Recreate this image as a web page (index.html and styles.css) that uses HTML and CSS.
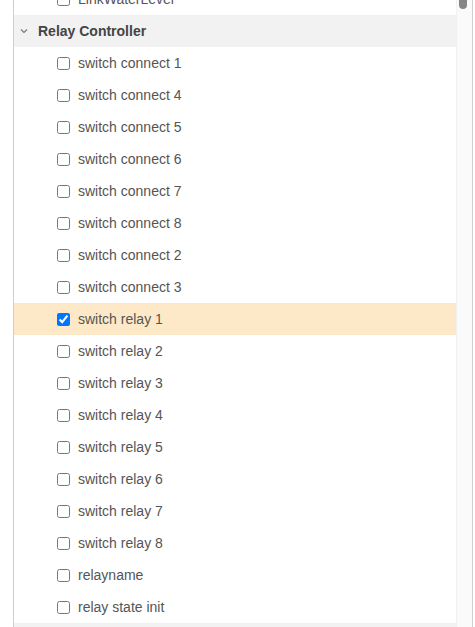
FILE: index.html
```html
<!DOCTYPE html>
<html lang="en">
<head>
    <meta charset="UTF-8">
    <title>Relay Controller</title>
    <link rel="stylesheet" href="styles.css">
</head>
<body>
    <div class="panel">
        <div class="tree">
            <!-- previous group, scrolled out of view -->
            <label class="item"><input type="checkbox"><span>LinkWaterLevel</span></label>

            <div class="group-header">
                <svg class="chevron" width="8" height="6" viewBox="0 0 8 6"><path d="M1 1.5 L4 4.5 L7 1.5" fill="none" stroke="#777" stroke-width="1.1"/></svg>
                <span>Relay Controller</span>
            </div>

            <label class="item"><input type="checkbox"><span>switch connect 1</span></label>
            <label class="item"><input type="checkbox"><span>switch connect 4</span></label>
            <label class="item"><input type="checkbox"><span>switch connect 5</span></label>
            <label class="item"><input type="checkbox"><span>switch connect 6</span></label>
            <label class="item"><input type="checkbox"><span>switch connect 7</span></label>
            <label class="item"><input type="checkbox"><span>switch connect 8</span></label>
            <label class="item"><input type="checkbox"><span>switch connect 2</span></label>
            <label class="item"><input type="checkbox"><span>switch connect 3</span></label>
            <label class="item selected"><input type="checkbox" checked><span>switch relay 1</span></label>
            <label class="item"><input type="checkbox"><span>switch relay 2</span></label>
            <label class="item"><input type="checkbox"><span>switch relay 3</span></label>
            <label class="item"><input type="checkbox"><span>switch relay 4</span></label>
            <label class="item"><input type="checkbox"><span>switch relay 5</span></label>
            <label class="item"><input type="checkbox"><span>switch relay 6</span></label>
            <label class="item"><input type="checkbox"><span>switch relay 7</span></label>
            <label class="item"><input type="checkbox"><span>switch relay 8</span></label>
            <label class="item"><input type="checkbox"><span>relayname</span></label>
            <label class="item"><input type="checkbox"><span>relay state init</span></label>

            <div class="group-header"></div>
        </div>
        <div class="scrollbar">
            <div class="thumb"></div>
        </div>
    </div>
</body>
</html>
```

FILE: styles.css
```css
body {
    margin: 0;
    font-family: 'Liberation Sans', Arial, sans-serif;
    font-size: 14px;
    color: #555;
    background: #fff;
}

.panel {
    margin-left: 13px;
    width: 458px;
    height: 627px;
    border-left: 1px solid #cfcfcf;
    border-right: 1px solid #cfcfcf;
    display: flex;
    overflow: hidden;
}

.tree {
    flex: 1;
    margin-top: -17px;
}

.item {
    display: flex;
    align-items: center;
    height: 32px;
    padding-left: 43px;
    gap: 8px;
}

.item input {
    margin: 0;
    width: 13px;
    height: 13px;
}

.item.selected {
    background-color: #fde9c7;
}

.group-header {
    display: flex;
    align-items: center;
    height: 32px;
    background-color: #f2f2f2;
    font-weight: bold;
    color: #444;
}

.chevron {
    margin-left: 6px;
    margin-right: 10px;
}

.scrollbar {
    width: 15px;
    background-color: #fafafa;
    border-left: 1px solid #f1f1f1;
    position: relative;
}

.thumb {
    position: absolute;
    left: 2px;
    top: -6px;
    width: 8px;
    height: 15px;
    border-radius: 4px;
    background-color: #858585;
}
```
